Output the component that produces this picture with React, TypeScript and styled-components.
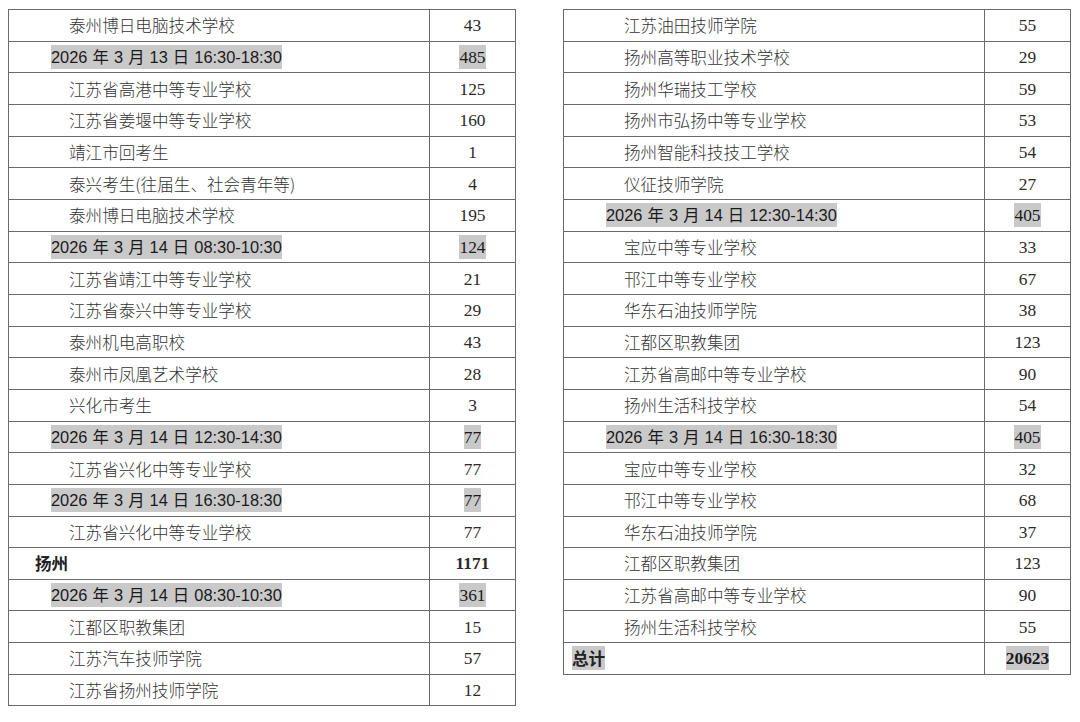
import React from "react";
import styled, { createGlobalStyle } from "styled-components";

const GlobalStyle = createGlobalStyle`
  html, body { margin: 0; padding: 0; background: #ffffff; }
  body { font-family: "Noto Sans CJK SC", sans-serif; color: #333; }
`;

type Kind = "school" | "date" | "city" | "total";
type Row = { label: string; value: string; kind: Kind };

const leftRows: Row[] = [
  { label: "泰州博日电脑技术学校", value: "43", kind: "school" },
  { label: "2026 年 3 月 13 日 16:30-18:30", value: "485", kind: "date" },
  { label: "江苏省高港中等专业学校", value: "125", kind: "school" },
  { label: "江苏省姜堰中等专业学校", value: "160", kind: "school" },
  { label: "靖江市回考生", value: "1", kind: "school" },
  { label: "泰兴考生(往届生、社会青年等)", value: "4", kind: "school" },
  { label: "泰州博日电脑技术学校", value: "195", kind: "school" },
  { label: "2026 年 3 月 14 日 08:30-10:30", value: "124", kind: "date" },
  { label: "江苏省靖江中等专业学校", value: "21", kind: "school" },
  { label: "江苏省泰兴中等专业学校", value: "29", kind: "school" },
  { label: "泰州机电高职校", value: "43", kind: "school" },
  { label: "泰州市凤凰艺术学校", value: "28", kind: "school" },
  { label: "兴化市考生", value: "3", kind: "school" },
  { label: "2026 年 3 月 14 日 12:30-14:30", value: "77", kind: "date" },
  { label: "江苏省兴化中等专业学校", value: "77", kind: "school" },
  { label: "2026 年 3 月 14 日 16:30-18:30", value: "77", kind: "date" },
  { label: "江苏省兴化中等专业学校", value: "77", kind: "school" },
  { label: "扬州", value: "1171", kind: "city" },
  { label: "2026 年 3 月 14 日 08:30-10:30", value: "361", kind: "date" },
  { label: "江都区职教集团", value: "15", kind: "school" },
  { label: "江苏汽车技师学院", value: "57", kind: "school" },
  { label: "江苏省扬州技师学院", value: "12", kind: "school" },
];

const rightRows: Row[] = [
  { label: "江苏油田技师学院", value: "55", kind: "school" },
  { label: "扬州高等职业技术学校", value: "29", kind: "school" },
  { label: "扬州华瑞技工学校", value: "59", kind: "school" },
  { label: "扬州市弘扬中等专业学校", value: "53", kind: "school" },
  { label: "扬州智能科技技工学校", value: "54", kind: "school" },
  { label: "仪征技师学院", value: "27", kind: "school" },
  { label: "2026 年 3 月 14 日 12:30-14:30", value: "405", kind: "date" },
  { label: "宝应中等专业学校", value: "33", kind: "school" },
  { label: "邗江中等专业学校", value: "67", kind: "school" },
  { label: "华东石油技师学院", value: "38", kind: "school" },
  { label: "江都区职教集团", value: "123", kind: "school" },
  { label: "江苏省高邮中等专业学校", value: "90", kind: "school" },
  { label: "扬州生活科技学校", value: "54", kind: "school" },
  { label: "2026 年 3 月 14 日 16:30-18:30", value: "405", kind: "date" },
  { label: "宝应中等专业学校", value: "32", kind: "school" },
  { label: "邗江中等专业学校", value: "68", kind: "school" },
  { label: "华东石油技师学院", value: "37", kind: "school" },
  { label: "江都区职教集团", value: "123", kind: "school" },
  { label: "江苏省高邮中等专业学校", value: "90", kind: "school" },
  { label: "扬州生活科技学校", value: "55", kind: "school" },
  { label: "总计", value: "20623", kind: "total" },
];

const indent: Record<Kind, number> = { school: 60, date: 42, city: 26, total: 8 };

const Page = styled.div`
  display: flex;
  gap: 47px;
  padding: 9px 0 0 8px;
  align-items: flex-start;
`;

const Table = styled.div`
  display: grid;
  grid-template-columns: 421px 86px;
  grid-auto-rows: 31.67px;
  border-top: 1px solid #6a6a6a;
  border-left: 1px solid #6a6a6a;
`;

const Cell = styled.div`
  box-sizing: border-box;
  border-right: 1px solid #6a6a6a;
  border-bottom: 1px solid #6a6a6a;
  display: flex;
  align-items: center;
  white-space: nowrap;
  overflow: hidden;
`;

const NameCell = styled(Cell)<{ $indent: number }>`
  padding-left: ${(p) => p.$indent}px;
`;

const ValueCell = styled(Cell)`
  justify-content: center;
`;

const SchoolText = styled.span`
  font-family: "Noto Sans CJK SC", sans-serif;
  font-size: 16.6px;
  font-weight: 300;
  color: #333;
  line-height: 24px;
`;

const Highlight = styled.span`
  background: #c9c9c9;
  line-height: 24px;
  display: inline-block;
`;

const DateText = styled(Highlight)`
  font-family: "Liberation Sans", "Noto Sans CJK SC", sans-serif;
  font-size: 16.4px;
  color: #1a1a1a;
  word-spacing: 0.5px;
`;

const CityText = styled.span`
  font-family: "Noto Sans CJK SC", sans-serif;
  font-size: 16.6px;
  font-weight: 700;
  color: #222;
  line-height: 24px;
`;

const TotalText = styled(Highlight)`
  font-family: "Noto Sans CJK SC", sans-serif;
  font-size: 16.6px;
  font-weight: 700;
  color: #222;
`;

const Num = styled.span<{ $bold?: boolean }>`
  font-family: "Liberation Serif", serif;
  font-size: 17.4px;
  color: #2a2a2a;
  font-weight: ${(p) => (p.$bold ? 700 : 400)};
  line-height: 24px;
`;

const HiNum = styled(Highlight)<{ $bold?: boolean }>`
  font-family: "Liberation Serif", serif;
  font-size: 17.4px;
  color: #1a1a1a;
  font-weight: ${(p) => (p.$bold ? 700 : 400)};
`;

function Label({ row }: { row: Row }) {
  switch (row.kind) {
    case "date":
      return <DateText>{row.label}</DateText>;
    case "city":
      return <CityText>{row.label}</CityText>;
    case "total":
      return <TotalText>{row.label}</TotalText>;
    default:
      return <SchoolText>{row.label}</SchoolText>;
  }
}

function Value({ row }: { row: Row }) {
  if (row.kind === "date") return <HiNum>{row.value}</HiNum>;
  if (row.kind === "total") return <HiNum $bold>{row.value}</HiNum>;
  if (row.kind === "city") return <Num $bold>{row.value}</Num>;
  return <Num>{row.value}</Num>;
}

function DataTable({ rows }: { rows: Row[] }) {
  return (
    <Table>
      {rows.map((r, i) => (
        <React.Fragment key={i}>
          <NameCell $indent={indent[r.kind]}>
            <Label row={r} />
          </NameCell>
          <ValueCell>
            <Value row={r} />
          </ValueCell>
        </React.Fragment>
      ))}
    </Table>
  );
}

export default function App() {
  return (
    <>
      <GlobalStyle />
      <Page>
        <DataTable rows={leftRows} />
        <DataTable rows={rightRows} />
      </Page>
    </>
  );
}
